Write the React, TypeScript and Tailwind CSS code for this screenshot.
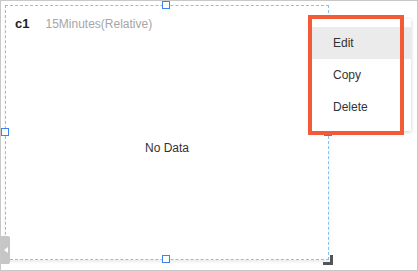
import { useState } from "react";

const items = ["Edit", "Copy", "Delete"];

function Handle({ className }: { className: string }) {
  return (
    <span
      className={`absolute w-2 h-2 bg-white border border-[#3d85ee] ${className}`}
    />
  );
}

export default function App() {
  const [active] = useState("Edit");

  return (
    <div
      className="relative w-[418px] h-[271px] bg-white border border-[#c8c8c8] overflow-hidden"
      style={{ fontFamily: '"Liberation Sans", Arial, sans-serif' }}
    >
      {/* chart card */}
      <div className="ml-[4px] mt-[4px] w-[324px] h-[255px] border border-dashed border-[#86bff0] shadow-[0_2px_3px_rgba(0,0,0,0.08)] flex flex-col">
        <div className="flex items-baseline gap-[16px] pl-[9px] pt-[8px] h-[30px]">
          <span className="text-[13px] font-bold text-[#222]">c1</span>
          <span className="text-[12px] text-[#a6a6a6]">15Minutes(Relative)</span>
        </div>
        <div className="flex-1 flex items-center justify-center text-[12px] text-[#333]">
          No Data
        </div>
      </div>

      {/* resize handles */}
      <Handle className="left-[161px] top-0" />
      <Handle className="left-0 top-[127px]" />
      <Handle className="left-[161px] top-[254px]" />
      <Handle className="left-[323px] top-[127px]" />

      {/* corner resize grip */}
      <span className="absolute left-[322px] top-[254px] w-[10px] h-[10px] border-r-[3px] border-b-[3px] border-[#555]" />

      {/* collapse tab */}
      <div className="absolute left-0 top-[235px] w-[9px] h-[28px] bg-[#c6c6c6] rounded-r-[2px] flex items-center justify-center">
        <span className="w-0 h-0 border-y-[3px] border-y-transparent border-r-[4px] border-r-white" />
      </div>

      {/* context menu */}
      <div className="absolute left-[309px] top-[18px] w-[101px] py-2 bg-white shadow-[0_1px_4px_rgba(0,0,0,0.2)]">
        {items.map((item) => (
          <div
            key={item}
            className={`h-8 flex items-center pl-[23px] text-[12px] text-[#333] ${
              item === active ? "bg-[#ebebeb]" : ""
            }`}
          >
            {item}
          </div>
        ))}
      </div>

      {/* highlight annotation */}
      <div className="absolute left-[307px] top-[14px] w-[96px] h-[120px] border-4 border-[#f25a38]" />
    </div>
  );
}
